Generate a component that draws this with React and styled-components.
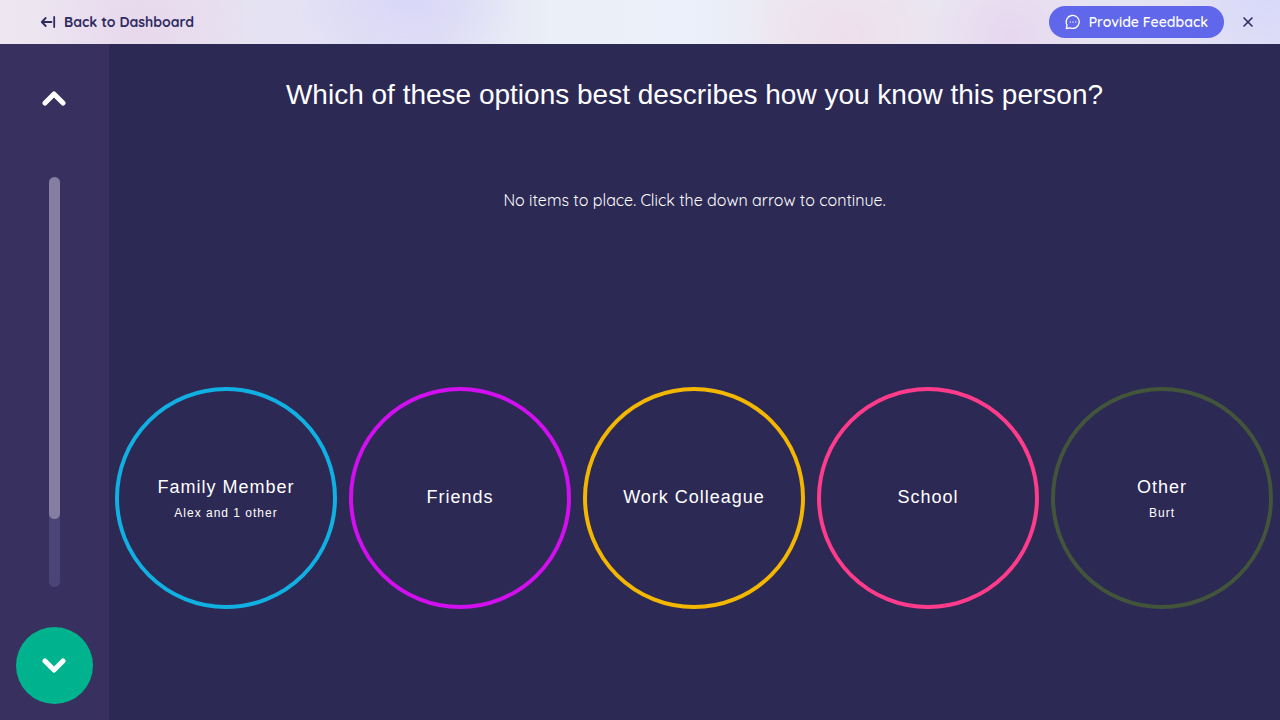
import React from "react";
import styled, { createGlobalStyle } from "styled-components";

const GlobalStyle = createGlobalStyle`
  *, *::before, *::after { box-sizing: border-box; }
  body { margin: 0; background: #2d2955; }
  button { font: inherit; border: 0; padding: 0; cursor: pointer; }
  h1, h2, p { margin: 0; font-weight: 400; }
`;

const rounded = `Quicksand, Lato, "Open Sans", sans-serif`;
const sans = `Helvetica, "Liberation Sans", Arial, sans-serif`;

const Page = styled.div`
  min-height: 100vh;
  display: flex;
  flex-direction: column;
  color: #fff;
`;

const TopBar = styled.header`
  height: 44px;
  display: flex;
  align-items: center;
  justify-content: space-between;
  padding: 0 24px 0 40px;
  font-family: ${rounded};
  font-size: 14px;
  line-height: 20px;
  color: #2f2b5f;
  background:
    radial-gradient(ellipse 110px 70px at 32% 0%, #d9d7f8, #d9d7f800),
    radial-gradient(ellipse 110px 90px at 11% 60%, #e8d8ed, #e8d8ed00),
    radial-gradient(ellipse 100px 80px at 66% 80%, #eedfeb, #eedfeb00),
    radial-gradient(ellipse 90px 80px at 79% 80%, #e7d7ef, #e7d7ef00),
    radial-gradient(ellipse 90px 70px at 99% 0%, #d8d8fa, #d8d8fa00),
    linear-gradient(90deg, #eee7f1 0%, #e9e2f0 12%, #e4e2f3 22%, #e1dff4 33%, #ebeff7 43%, #ebf0fa 54%, #ece8f2 62%, #e9e6f2 78%, #e6e4f2 88%, #e1dff5 100%);
`;

const BackLink = styled.a`
  display: flex;
  align-items: center;
  gap: 8px;
  color: inherit;
  font-weight: 700;
  text-decoration: none;
`;

const Actions = styled.div`
  display: flex;
  align-items: center;
  gap: 16px;
`;

const FeedbackButton = styled.button`
  height: 32px;
  display: flex;
  align-items: center;
  gap: 8px;
  padding: 0 16px;
  border-radius: 16px;
  color: #fff;
  background: #6067ea;
  font-weight: 600;
`;

const CloseButton = styled.button`
  width: 16px;
  height: 16px;
  display: flex;
  color: inherit;
  background: none;
`;

const Body = styled.div`
  flex: 1;
  display: flex;
`;

const Sidebar = styled.nav`
  flex: none;
  display: flex;
  flex-direction: column;
  align-items: center;
  gap: 40px;
  padding: 16px;
  background: #383160;
`;

const StepButton = styled.button`
  width: 77px;
  height: 77px;
  display: flex;
  align-items: center;
  justify-content: center;
  border-radius: 50%;
  color: #fff;
  background: ${({ $active }) => ($active ? "#00b38f" : "transparent")};
`;

const Track = styled.div`
  flex: 1;
  width: 11px;
  display: flex;
  border-radius: 6px;
  background: #4a4477;
`;

const Fill = styled.div`
  width: 100%;
  border-radius: 6px;
  background: #857ea2;
`;

const Stage = styled.main`
  flex: 1;
  min-width: 0;
  display: flex;
  flex-direction: column;
  padding-top: 33px;
  font-family: ${sans};
  text-align: center;
`;

const Prompt = styled.h1`
  font-size: 28px;
  line-height: 36px;
`;

const Message = styled.p`
  padding: 75px 0 64px;
  font-family: ${rounded};
  font-size: 16px;
  font-weight: 400;
  line-height: 24px;
`;

const Bins = styled.div`
  flex: 1;
  display: grid;
  grid-template-columns: repeat(5, 1fr);
  align-items: center;
  gap: 12px;
  padding: 0 7px 0 6px;
`;

const Bin = styled.section`
  aspect-ratio: 1;
  display: flex;
  flex-direction: column;
  align-items: center;
  justify-content: center;
  gap: 4px;
  padding-bottom: 3px;
  border: 4px solid ${({ $color }) => $color};
  border-radius: 50%;
  letter-spacing: 1px;
`;

const BinTitle = styled.h2`
  font-size: 18px;
  line-height: 28px;
`;

const BinDetail = styled.p`
  font-size: 12px;
  line-height: 16px;
`;

const bins = [
  { title: "Family Member", detail: "Alex and 1 other", color: "#10b0e2" },
  { title: "Friends", color: "#d20fee" },
  { title: "Work Colleague", color: "#f3b700" },
  { title: "School", color: "#ff3b8c" },
  { title: "Other", detail: "Burt", color: "#42543a" },
];

const Chevron = ({ d }) => (
  <svg width="25" height="18" viewBox="0 0 25 18" fill="none" stroke="currentColor" strokeWidth="5" strokeLinecap="round" strokeLinejoin="round" aria-hidden="true">
    <path d={d} />
  </svg>
);

export default function App() {
  const progress = 83.4;
  return (
    <>
      <GlobalStyle />
      <Page>
        <TopBar>
          <BackLink href="#dashboard">
            <svg width="16" height="16" viewBox="0 0 16 16" fill="none" stroke="currentColor" strokeWidth="1.8" strokeLinecap="round" strokeLinejoin="round" aria-hidden="true">
              <path d="M11.5 8H2M5.7 4 1.8 8l3.9 4M14.2 3v10" />
            </svg>
            Back to Dashboard
          </BackLink>
          <Actions>
            <FeedbackButton type="button">
              <svg width="16" height="16" viewBox="0 0 16 16" fill="none" stroke="currentColor" strokeWidth="1.3" strokeLinecap="round" strokeLinejoin="round" aria-hidden="true">
                <path d="M1.3 14.5 2 11A6.5 6.5 0 1 1 5 13.8Z" />
                <path d="M5.3 8h.01M8 8h.01M10.7 8h.01" />
              </svg>
              Provide Feedback
            </FeedbackButton>
            <CloseButton type="button" aria-label="Close">
              <svg width="16" height="16" viewBox="0 0 16 16" stroke="currentColor" strokeWidth="1.6" strokeLinecap="round" aria-hidden="true">
                <path d="m4 4 8 8M12 4l-8 8" />
              </svg>
            </CloseButton>
          </Actions>
        </TopBar>
        <Body>
          <Sidebar aria-label="Interview progress">
            <StepButton type="button" aria-label="Previous">
              <Chevron d="m3 13 9-9 9 9" />
            </StepButton>
            <Track>
              <Fill style={{ height: `${progress}%` }} />
            </Track>
            <StepButton type="button" aria-label="Next" $active>
              <Chevron d="m3 4 9 9 9-9" />
            </StepButton>
          </Sidebar>
          <Stage>
            <Prompt>Which of these options best describes how you know this person?</Prompt>
            <Message>No items to place. Click the down arrow to continue.</Message>
            <Bins>
              {bins.map((bin) => (
                <Bin key={bin.title} $color={bin.color}>
                  <BinTitle>{bin.title}</BinTitle>
                  {bin.detail && <BinDetail>{bin.detail}</BinDetail>}
                </Bin>
              ))}
            </Bins>
          </Stage>
        </Body>
      </Page>
    </>
  );
}
